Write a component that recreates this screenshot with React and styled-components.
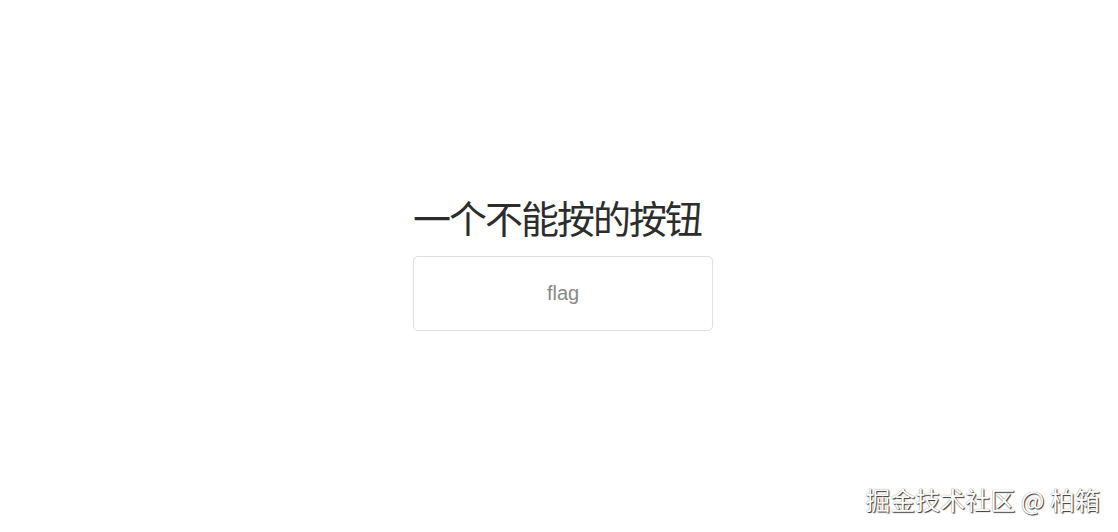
import React from "react";
import styled, { createGlobalStyle } from "styled-components";

const Global = createGlobalStyle`
  html, body { margin: 0; padding: 0; background: #fff; }
  body { font-family: "Liberation Sans", "Noto Sans CJK SC", sans-serif; }
`;

const Page = styled.div`
  position: relative;
  width: 1118px;
  height: 532px;
  display: flex;
  align-items: center;
  justify-content: center;
  overflow: hidden;
`;

const Box = styled.div`
  display: flex;
  flex-direction: column;
  align-items: flex-start;
  gap: 16px;
  margin-left: 8px;
  margin-top: -8px;
`;

const Title = styled.div`
  margin: 0;
  font-family: "Noto Sans CJK SC", sans-serif;
  font-weight: 400;
  font-size: 38px;
  line-height: 46px;
  letter-spacing: -2px;
  color: #2c2c2c;
  white-space: nowrap;
`;

const FlagButton = styled.button`
  width: 300px;
  height: 75px;
  border: 1px solid #dcdfe6;
  border-radius: 5px;
  background: #fff;
  color: #888;
  font-family: "Liberation Sans", Arial, sans-serif;
  font-size: 20px;
  cursor: not-allowed;
`;

const Watermark = styled.div`
  position: absolute;
  right: 18px;
  bottom: 18px;
  font-family: "Noto Sans CJK SC", sans-serif;
  font-size: 25px;
  line-height: 30px;
  color: #fff;
  text-shadow: 1px 1px 1px #333, 0 0 1px #777;
  white-space: nowrap;
`;

export default function App() {
  return (
    <>
      <Global />
      <Page>
        <Box>
          <Title>一个不能按的按钮</Title>
          <FlagButton>flag</FlagButton>
        </Box>
        <Watermark>掘金技术社区 @ 柏箱</Watermark>
      </Page>
    </>
  );
}
